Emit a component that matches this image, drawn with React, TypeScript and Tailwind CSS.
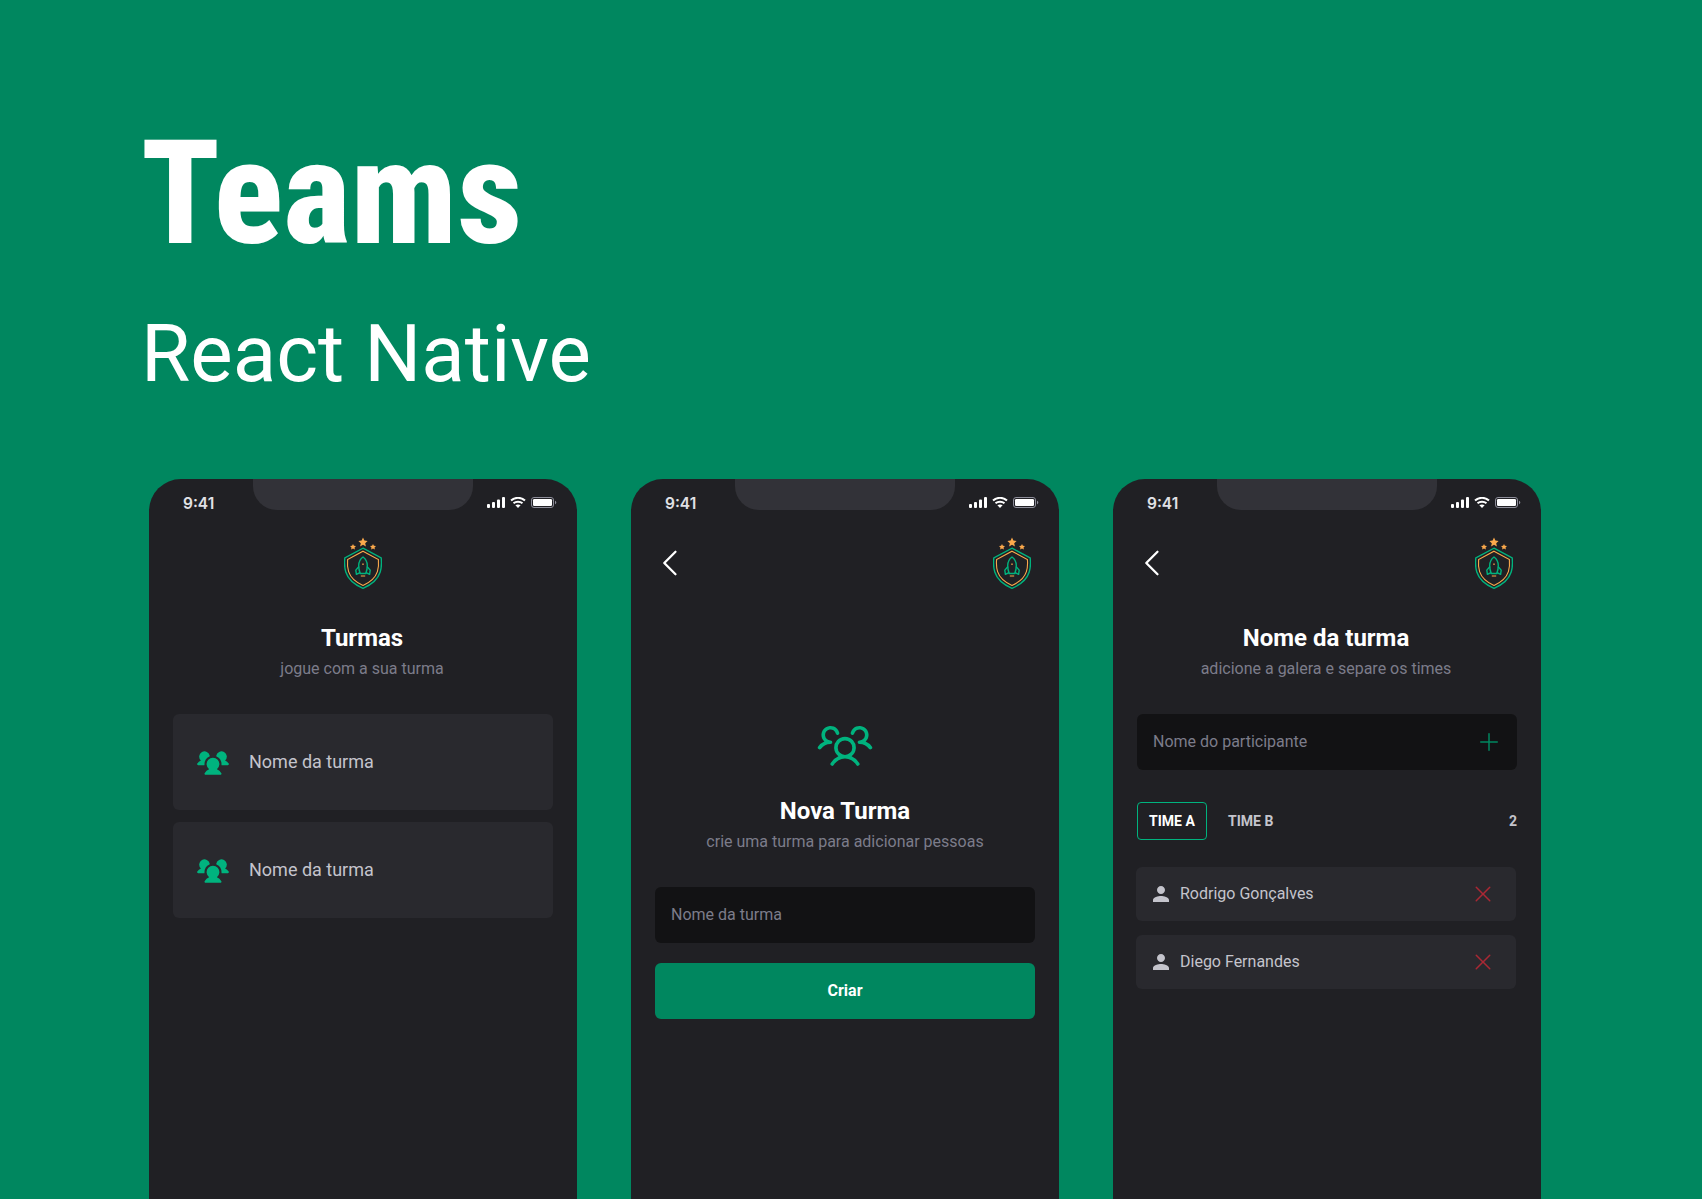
import { ReactNode } from 'react';
import { MdPerson } from 'react-icons/md';
import {
  PiCaretLeft,
  PiPlus,
  PiUsersThree,
  PiUsersThreeFill,
  PiX,
} from 'react-icons/pi';

function Logo() {
  return (
    <svg width="38" height="52" viewBox="0 0 38 52" fill="none">
      <path d="M19 0.6l1.4 3 3.2.4-2.4 2.2.7 3.2-2.9-1.6-2.9 1.6.7-3.2L14.4 4l3.2-.4z" fill="#FBA94C" />
      <path d="M9 6.9l.9 1.9 2.1.3-1.5 1.4.4 2.1L9 11.6l-1.9 1 .4-2.1L6 9.1l2.1-.3z" fill="#FBA94C" />
      <path d="M29 6.9l.9 1.9 2.1.3-1.5 1.4.4 2.1-1.9-1-1.9 1 .4-2.1L26 9.1l2.1-.3z" fill="#FBA94C" />
      <path
        d="M19 11.2L37.2 21c.5 5 .5 9-1 14-2.3 7.3-9 12.8-17.2 16.3C10.800 47.800 4.100 42.300 1.800 35c-1.500-5-1.500-9-1-14z"
        stroke="#00B37E"
        strokeWidth="1.4"
      />
      <path
        d="M19 14.200L34.400 22.600c.4 4.400.3 7.800-1 12-2 6-7.500 10.800-14.400 13.800-6.900-3-12.400-7.800-14.400-13.800-1.300-4.200-1.400-7.600-1-12z"
        stroke="#FBA94C"
        strokeWidth="1.100"
      />
      <path
        d="M19 20c-2.700 2-4.300 5.200-4.300 8.500 0 2.700.6 5.600 1.500 8h5.600c.9-2.400 1.500-5.300 1.500-8 0-3.300-1.600-6.500-4.300-8.500z"
        stroke="#00B37E"
        strokeWidth="1.400"
      />
      <path
        d="M15 29.500l-3.200 3.600.6 4.200 3.800-1.800M23 29.500l3.200 3.600-.6 4.200-3.800-1.800"
        stroke="#00B37E"
        strokeWidth="1.400"
        strokeLinejoin="round"
      />
      <rect x="18.300" y="26.500" width="1.400" height="1.400" fill="#FBA94C" />
      <rect x="16.800" y="38.500" width="4.400" height="1" fill="#FBA94C" />
    </svg>
  );
}

function StatusIcons() {
  return (
    <div className="flex items-center gap-[5px] pl-[14px] pt-[18px]">
      <svg width="18" height="11" viewBox="0 0 18 11" fill="#fff">
        <rect x="0" y="7" width="3" height="4" rx="1" />
        <rect x="5" y="5" width="3" height="6" rx="1" />
        <rect x="10" y="2.500" width="3" height="8.500" rx="1" />
        <rect x="15" y="0" width="3" height="11" rx="1" />
      </svg>
      <svg width="16" height="11" viewBox="0 0 16 11" fill="none" stroke="#fff" strokeWidth="2">
        <path d="M1 3.600C5 -0.100 11 -0.100 15 3.600" />
        <path d="M3.500 6.300C6 4.100 10 4.100 12.500 6.300" />
        <path d="M8 11l-2.600-2.700c1.500-1.200 3.700-1.200 5.200 0z" fill="#fff" stroke="none" />
      </svg>
      <svg width="26" height="11" viewBox="0 0 26 11" fill="none">
        <rect x="0.500" y="0.500" width="22" height="10" rx="2.500" stroke="#8D8D99" />
        <rect x="2" y="2" width="19" height="7" rx="1.300" fill="#fff" />
        <path d="M24 3.800c.8.300 1.300 1 1.300 1.700s-.5 1.400-1.300 1.700z" fill="#8D8D99" />
      </svg>
    </div>
  );
}

function Phone({ children }: { children: ReactNode }) {
  return (
    <div className="w-[428px] h-[760px] bg-[#202024] rounded-t-[32px] overflow-hidden shrink-0">
      <div className="grid grid-cols-[104px_220px_1fr] items-start h-[31px]">
        <span className="pl-[34px] pt-[16px] text-[15.5px] leading-[18px] font-semibold text-[#E1E1E6] font-['Inter',sans-serif]">
          9:41
        </span>
        <div className="h-[31px] bg-[#323238] rounded-b-[24px]" />
        <StatusIcons />
      </div>
      {children}
    </div>
  );
}

function Header({ back }: { back?: boolean }) {
  if (!back) {
    return (
      <div className="flex justify-center mt-[27px] h-[52px]">
        <Logo />
      </div>
    );
  }
  return (
    <div className="flex items-center justify-between mt-[27px] h-[52px] pl-[22px] pr-[28px]">
      <PiCaretLeft size={36} color="#fff" />
      <Logo />
    </div>
  );
}

function Highlight({ title, subtitle }: { title: string; subtitle: string }) {
  return (
    <div className="text-center">
      <h2 className="text-2xl leading-8 font-bold text-white">{title}</h2>
      <p className="mt-[3px] text-base leading-6 text-[#7C7C8A]">{subtitle}</p>
    </div>
  );
}

function GroupCard() {
  return (
    <div className="flex items-center gap-[19px] h-24 pl-[23px] pr-6 bg-[#29292E] rounded-md">
      <PiUsersThreeFill size={34} color="#00B37E" />
      <span className="text-lg text-[#C4C4CC]">Nome da turma</span>
    </div>
  );
}

function Member({ name }: { name: string }) {
  return (
    <div className="flex items-center h-[54px] pl-[13px] pr-[21px] bg-[#29292E] rounded-md">
      <MdPerson size={24} color="#C4C4CC" />
      <span className="ml-[7px] flex-1 text-base text-[#C4C4CC]">{name}</span>
      <PiX size={24} color="#AA2834" />
    </div>
  );
}

export default function App() {
  return (
    <div className="h-screen overflow-hidden bg-[#00875F] text-white font-['Roboto',sans-serif] pl-[141px]">
      <h1 className="pt-[110px] text-[144px] leading-[168px] font-extrabold [font-stretch:75%]">Teams</h1>
      <p className="mt-[29px] text-[80px] leading-[94px]">React Native</p>

      <div className="flex gap-[54px] ml-[8px] mt-[78px]">
        <Phone>
          <Header />
          <div className="mt-[33px] pr-[2px]">
            <Highlight title="Turmas" subtitle="jogue com a sua turma" />
          </div>
          <div className="flex flex-col gap-3 mt-[33px] px-6">
            <GroupCard />
            <GroupCard />
          </div>
        </Phone>

        <Phone>
          <Header back />
          <div className="flex justify-center mt-[126px]">
            <PiUsersThree size={58} color="#00B37E" />
          </div>
          <div className="mt-[22px]">
            <Highlight title="Nova Turma" subtitle="crie uma turma para adicionar pessoas" />
          </div>
          <div className="flex flex-col gap-5 mt-[33px] px-6">
            <div className="flex items-center h-14 px-4 bg-[#121214] rounded-md text-base text-[#7C7C8A]">
              Nome da turma
            </div>
            <div className="flex items-center justify-center h-14 bg-[#00875F] rounded-md text-base font-bold text-white">
              Criar
            </div>
          </div>
        </Phone>

        <Phone>
          <Header back />
          <div className="mt-[33px] pr-[2px]">
            <Highlight title="Nome da turma" subtitle="adicione a galera e separe os times" />
          </div>
          <div className="mt-[33px] px-6">
            <div className="flex items-center justify-between h-14 pl-4 pr-[16px] bg-[#121214] rounded-md text-base text-[#7C7C8A]">
              Nome do participante
              <PiPlus size={24} color="#00875F" />
            </div>
            <div className="flex items-center mt-8 h-[38px] text-sm font-bold">
              <div className="flex items-center justify-center w-[70px] h-[38px] border border-[#00B37E] rounded text-white">
                TIME A
              </div>
              <span className="ml-[21px] flex-1 text-[#C4C4CC]">TIME B</span>
              <span className="text-[#C4C4CC]">2</span>
            </div>
            <div className="flex flex-col gap-[14px] mt-[27px] -ml-px mr-px">
              <Member name="Rodrigo Gonçalves" />
              <Member name="Diego Fernandes" />
            </div>
          </div>
        </Phone>
      </div>
    </div>
  );
}
